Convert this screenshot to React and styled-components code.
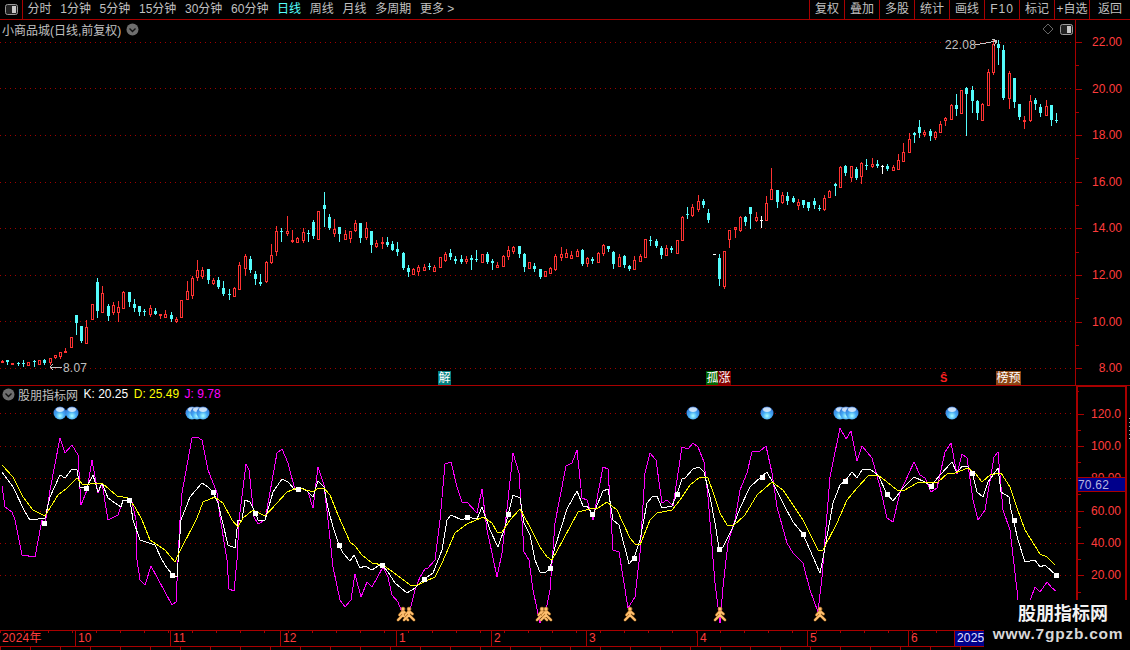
import React from "react";
import styled, { createGlobalStyle } from "styled-components";

const RED_LINE = "#a80000";
const AXIS_RED = "#ff3c3c";
const UI_FONT = `"Liberation Sans", "Noto Sans CJK SC", sans-serif`;

const GlobalStyle = createGlobalStyle`
  html, body {
    margin: 0;
    padding: 0;
    background: #000;
    overflow: hidden;
  }
`;

const Screen = styled.div`
  position: relative;
  width: 1130px;
  height: 650px;
  background: #000;
  display: flex;
  flex-direction: column;
  overflow: hidden;
  font-family: ${UI_FONT};
  font-size: 12px;
  color: #c0c0c0;
`;

// top toolbar
const Toolbar = styled.div`
  display: flex;
  height: 19px;
  flex: none;
  border-bottom: 1px solid ${RED_LINE};
  line-height: 19px;
`;

const PanelToggle = styled.div`
  width: 23px;
  flex: none;
  display: flex;
  align-items: center;
  padding-left: 5px;
  box-sizing: border-box;
  border-right: 1px solid ${RED_LINE};
`;

const PeriodList = styled.div`
  flex: 1;
  display: flex;
  gap: 8.7px;
  padding-left: 4.5px;
`;

const Period = styled.span`
  color: ${(p) => (p.$active ? "#54ffff" : "#c0c0c0")};
  white-space: nowrap;
`;

const ToolButton = styled.div`
  width: ${(p) => p.$w || 35}px;
  box-sizing: border-box;
  border-left: 1px solid ${RED_LINE};
  text-align: center;
  white-space: nowrap;
  letter-spacing: ${(p) => p.$spaced || 0}px;
`;

// panes
const Pane = styled.div`
  display: flex;
  flex: none;
  height: ${(p) => p.$h}px;
  box-sizing: border-box;
  border-bottom: ${(p) => (p.$divided ? `1px solid ${RED_LINE}` : "none")};
`;

const Plot = styled.div`
  position: relative;
  width: 1075px;
  flex: none;
`;

const ChartCanvas = styled.svg`
  position: absolute;
  left: 0;
  top: 0;
  display: block;
`;

const PaneHeader = styled.div`
  position: relative;
  display: flex;
  align-items: center;
  height: 16px;
  padding: ${(p) => p.$pad};
  gap: ${(p) => p.$gap}px;
  white-space: nowrap;
`;

const IndicatorName = styled.span`
  margin-left: -2.5px;
`;

const Reading = styled.span`
  color: ${(p) => p.$color};
`;

const CornerTools = styled.div`
  position: absolute;
  right: 2px;
  top: 3px;
  display: flex;
  align-items: center;
  gap: 6px;
`;

const PriceTag = styled.span`
  position: absolute;
  left: ${(p) => p.$x}px;
  top: ${(p) => p.$y}px;
  line-height: 14px;
  color: #c0c0c0;
  letter-spacing: 0.2px;
`;

const Badge = styled.span`
  position: absolute;
  left: ${(p) => p.$x}px;
  top: 351px;
  height: 14px;
  line-height: 14px;
  padding: 0 0.5px;
  font-size: 12px;
  color: #fff;
  background: ${(p) => p.$bg};
`;

const DollarMark = styled.span`
  position: absolute;
  left: 940px;
  top: 351px;
  font-size: 11px;
  line-height: 14px;
  font-weight: bold;
  color: #ff2020;
`;

// right hand value axes
const PriceAxis = styled.div`
  flex: 1;
  box-sizing: border-box;
  border-left: 1px solid ${RED_LINE};
  padding-top: 15px;
`;

const SubAxis = styled.div`
  position: relative;
  width: 51px;
  margin-right: 2px;
  flex: none;
  box-sizing: border-box;
  border-left: 2px solid ${RED_LINE};
  border-right: 2px solid ${RED_LINE};
  border-top: 1px solid ${RED_LINE};
  margin-left: 1px;
  padding-top: 19.5px;
`;

const AxisRow = styled.div`
  position: relative;
  height: ${(p) => p.$h}px;
  line-height: 14px;
  text-align: right;
  padding-right: ${(p) => p.$right}px;
  color: ${AXIS_RED};

  &::before {
    content: "";
    position: absolute;
    left: 0;
    top: 7px;
    width: 6px;
    height: 1px;
    background: ${RED_LINE};
  }

  &::after {
    content: "";
    position: absolute;
    left: 0;
    top: ${(p) => 7 + p.$h / 2}px;
    width: 3px;
    height: 1px;
    background: ${RED_LINE};
  }
`;

const LatestValue = styled.div`
  position: absolute;
  left: 0;
  top: 90px;
  width: 47px;
  height: 15px;
  box-sizing: border-box;
  border-top: 1px solid ${RED_LINE};
  border-bottom: 1px solid ${RED_LINE};
  background: #00008b;
  color: #b8b8e0;
  line-height: 14px;
  letter-spacing: 0.2px;
`;

const SideScale = styled.div`
  width: 3px;
  height: 19px;
  margin-top: 32px;
  flex: none;
  border-top: 1px solid #bbb;
  border-bottom: 1px solid #bbb;
  background: repeating-linear-gradient(#000 0 3px, #999 3px 4px);
`;

// date axis
const DateAxis = styled.div`
  display: flex;
  flex: none;
  height: 17px;
  box-sizing: border-box;
  border-top: 1px solid ${RED_LINE};
  border-bottom: 1px solid ${RED_LINE};
  line-height: 15px;
  color: ${AXIS_RED};
  background: repeating-linear-gradient(90deg, ${RED_LINE} 0 1px, transparent 1px 24px) 0 0 / 100% 2px no-repeat;
`;

const DateCell = styled.div`
  flex: ${(p) => (p.$w ? `0 0 ${p.$w}px` : 1)};
  box-sizing: border-box;
  padding-left: 2px;
  border-left: ${(p) => (p.$first ? "none" : `1px solid ${RED_LINE}`)};
  background: ${(p) => p.$bg || "transparent"};
  color: ${(p) => p.$fg || AXIS_RED};
  letter-spacing: 0.2px;
  overflow: hidden;
`;

const BottomStrip = styled.div`
  flex: 1;
  background: repeating-linear-gradient(90deg, ${RED_LINE} 0 1px, transparent 1px 30px);
`;

const Watermark = styled.div`
  position: absolute;
  right: 0;
  bottom: 0;
  width: 146px;
  height: 50px;
  background: #000;
  display: flex;
  flex-direction: column;
  align-items: center;
  font-weight: bold;
`;

const MarkTitle = styled.div`
  padding: 2px 0 0 12px;
  font-size: 18px;
  line-height: 24px;
  color: #f2f2f2;
`;

const MarkUrl = styled.div`
  font-size: 15.5px;
  line-height: 16px;
  letter-spacing: 0.75px;
  padding-left: 2px;
  color: #d8d8d8;
`;

const PanelIcon = () => (
  <svg width="13" height="11" viewBox="0 0 13 11">
    <rect x="0.5" y="0.5" width="12" height="10" rx="2" fill="#222" stroke="#9a9a9a" />
    <rect x="7" y="2" width="4" height="7" fill="#c8c8c8" />
  </svg>
);

const DiamondIcon = () => (
  <svg width="12" height="12" viewBox="0 0 12 12">
    <path d="M6 1 L11 6 L6 11 L1 6 Z" fill="none" stroke="#666" />
  </svg>
);

const RoundChevron = () => (
  <svg width="13" height="13" viewBox="0 0 13 13">
    <circle cx="6.5" cy="6.5" r="6" fill="#6e6e6e" />
    <path d="M3.5 5.5 L6.5 8.5 L9.5 5.5" fill="none" stroke="#111" strokeWidth="1.4" />
  </svg>
);

// candles read as [x, high, top, bottom, low, kind] on a 3x grid per block
const seg = (ox, oy, rows) =>
  rows.map(([x, hi, top, bot, lo, kind]) => ({
    x: Math.round(ox + x / 3),
    hi: Math.round(oy + hi / 3),
    top: Math.round(oy + top / 3),
    bot: Math.round(oy + bot / 3),
    lo: Math.round(oy + lo / 3),
    kind,
  }));

const candles = [
  ...seg(0, 180, [
    [5, 541, 542, 545, 546, "r"], [22, 540, 540, 546, 552, "c"], [37, 549, 549, 550, 556, "r"], [55, 546, 549, 551, 554, "c"],
    [70, 540, 549, 551, 557, "c"], [85, 546, 546, 554, 554, "r"], [102, 540, 542, 545, 557, "c"], [118, 541, 541, 551, 551, "r"],
    [133, 537, 540, 550, 552, "c"], [151, 534, 534, 545, 555, "r"], [166, 526, 526, 531, 536, "r"], [181, 517, 517, 527, 537, "r"],
    [195, 504, 513, 516, 516, "r"], [214, 472, 472, 500, 502, "r"], [229, 405, 405, 429, 461, "c"], [244, 438, 438, 483, 486, "c"],
    [259, 420, 441, 489, 491, "r"], [277, 373, 373, 416, 416, "r"], [292, 294, 306, 392, 410, "c"], [307, 318, 340, 395, 395, "r"],
    [325, 372, 378, 408, 419, "c"], [340, 367, 376, 395, 404, "r"], [355, 363, 382, 395, 425, "r"], [370, 334, 336, 383, 383, "r"],
    [388, 336, 336, 365, 378, "c"], [403, 358, 372, 384, 392, "c"], [418, 378, 378, 396, 404, "c"], [433, 388, 393, 397, 404, "c"],
    [451, 376, 385, 401, 410, "r"], [466, 385, 393, 401, 401, "c"], [481, 403, 403, 405, 416, "r"], [496, 391, 402, 410, 410, "r"],
    [514, 397, 405, 417, 423, "c"], [529, 411, 417, 423, 429, "r"], [544, 361, 361, 410, 410, "r"], [562, 304, 334, 356, 356, "r"],
    [577, 289, 295, 344, 356, "r"], [592, 240, 271, 290, 302, "r"], [607, 262, 271, 288, 296, "r"], [625, 267, 267, 300, 308, "c"],
    [640, 295, 301, 309, 315, "r"], [655, 292, 301, 321, 324, "c"], [670, 304, 325, 342, 345, "c"], [688, 328, 341, 343, 356, "c"],
    [703, 322, 325, 348, 350, "r"], [718, 247, 256, 326, 326, "r"], [736, 222, 229, 263, 288, "r"], [751, 229, 238, 270, 276, "c"],
    [766, 274, 282, 296, 311, "c"], [781, 282, 307, 312, 315, "c"], [799, 244, 247, 303, 309, "r"], [814, 192, 226, 246, 252, "r"],
    [829, 138, 154, 214, 228, "r"], [844, 144, 153, 155, 183, "c"], [862, 108, 154, 159, 168, "r"], [877, 150, 179, 182, 189, "r"],
    [892, 172, 175, 186, 188, "r"], [910, 144, 157, 179, 189, "r"], [925, 150, 160, 163, 183, "c"], [940, 120, 126, 168, 174, "c"],
    [955, 92, 92, 176, 176, "r"], [973, 37, 75, 87, 138, "c"], [988, 102, 111, 144, 147, "c"], [1003, 117, 148, 158, 171, "r"],
    [1018, 141, 141, 162, 183, "c"], [1036, 150, 163, 176, 176, "r"],
  ]),
  ...seg(350, 180, [
    [0, 153, 153, 175, 188, "r"], [15, 120, 129, 150, 155, "r"], [30, 129, 129, 175, 186, "c"], [48, 126, 145, 170, 180, "r"],
    [63, 153, 153, 195, 216, "c"], [78, 181, 190, 198, 204, "r"], [96, 171, 186, 189, 207, "r"], [111, 171, 185, 195, 198, "c"],
    [126, 183, 192, 210, 210, "c"], [141, 186, 208, 216, 225, "c"], [159, 216, 219, 264, 267, "c"], [174, 255, 264, 276, 288, "c"],
    [189, 264, 267, 282, 285, "r"], [204, 255, 260, 273, 288, "r"], [222, 252, 261, 269, 269, "r"], [237, 249, 258, 261, 267, "c"],
    [252, 255, 260, 273, 276, "r"], [270, 232, 232, 260, 260, "r"], [285, 216, 222, 240, 246, "r"], [300, 207, 219, 231, 237, "c"],
    [315, 228, 237, 243, 249, "c"], [333, 225, 237, 246, 249, "c"], [348, 228, 237, 243, 252, "r"], [363, 225, 234, 240, 267, "c"],
    [378, 210, 236, 240, 243, "c"], [396, 222, 222, 245, 245, "r"], [411, 216, 222, 246, 249, "c"], [426, 237, 243, 248, 267, "c"],
    [441, 246, 256, 260, 264, "r"], [459, 225, 228, 258, 261, "r"], [474, 198, 210, 228, 240, "r"], [489, 198, 201, 213, 222, "r"],
    [507, 198, 198, 222, 231, "c"], [522, 219, 222, 261, 273, "c"], [537, 246, 246, 264, 264, "r"], [552, 249, 258, 267, 273, "c"],
    [570, 267, 267, 291, 294, "c"], [585, 273, 273, 288, 291, "r"], [600, 261, 264, 279, 282, "r"], [615, 222, 228, 267, 273, "r"],
    [633, 201, 222, 231, 243, "r"], [648, 207, 219, 231, 234, "r"], [663, 213, 225, 233, 233, "r"], [681, 207, 213, 228, 228, "r"],
    [696, 207, 210, 252, 255, "c"], [711, 231, 234, 249, 261, "r"], [726, 231, 237, 243, 249, "c"], [744, 216, 219, 246, 246, "r"],
    [759, 192, 195, 219, 228, "r"], [774, 198, 198, 207, 213, "c"], [789, 213, 216, 252, 264, "c"], [807, 222, 231, 258, 261, "r"],
    [822, 225, 228, 255, 261, "c"], [837, 255, 258, 267, 270, "c"], [852, 228, 240, 267, 267, "r"], [870, 222, 228, 243, 243, "r"],
    [885, 177, 177, 231, 231, "r"], [900, 168, 180, 183, 195, "c"], [918, 177, 183, 198, 201, "c"], [933, 198, 204, 225, 234, "c"],
    [948, 195, 204, 225, 225, "r"], [963, 198, 204, 210, 216, "c"], [981, 180, 180, 219, 219, "r"], [996, 108, 111, 180, 180, "r"],
    [1011, 81, 103, 105, 114, "c"], [1026, 72, 81, 105, 111, "r"], [1044, 45, 63, 87, 96, "r"], [1059, 57, 63, 75, 81, "c"],
    [1074, 87, 99, 120, 126, "c"], [1092, 223, 223, 223, 223, "w"], [1107, 222, 234, 297, 315, "c"], [1122, 213, 213, 318, 327, "r"],
  ]),
  ...seg(720, 30, [
    [28, 600, 600, 627, 654, "r"], [45, 591, 591, 598, 624, "r"], [61, 558, 561, 600, 606, "r"], [76, 558, 561, 576, 585, "c"],
    [91, 531, 531, 552, 594, "c"], [109, 546, 561, 570, 576, "r"], [124, 558, 570, 572, 591, "w"], [139, 498, 519, 570, 570, "r"],
    [154, 414, 477, 507, 510, "r"], [172, 480, 480, 516, 531, "c"], [187, 486, 495, 516, 522, "r"], [202, 486, 498, 513, 522, "c"],
    [220, 498, 504, 516, 516, "c"], [235, 507, 516, 525, 540, "r"], [250, 510, 510, 525, 531, "c"], [265, 516, 516, 534, 540, "c"],
    [283, 504, 513, 525, 534, "c"], [298, 525, 534, 537, 540, "c"], [313, 495, 504, 537, 543, "r"], [328, 480, 483, 501, 501, "r"],
    [346, 459, 462, 468, 495, "c"], [361, 408, 411, 471, 474, "r"], [376, 405, 408, 429, 435, "c"], [394, 408, 408, 441, 456, "r"],
    [409, 411, 417, 444, 447, "c"], [424, 396, 399, 438, 462, "r"], [439, 387, 406, 409, 417, "c"], [457, 384, 402, 408, 414, "r"],
    [472, 390, 402, 408, 411, "c"], [487, 405, 409, 411, 429, "w"], [502, 402, 408, 417, 420, "c"], [520, 405, 411, 420, 423, "r"],
    [535, 372, 390, 417, 420, "r"], [550, 339, 366, 393, 393, "r"], [568, 309, 327, 366, 366, "r"], [583, 306, 309, 315, 336, "c"],
    [598, 270, 291, 309, 321, "c"], [613, 300, 306, 312, 321, "r"], [631, 297, 303, 318, 330, "c"], [646, 303, 306, 321, 330, "r"],
    [661, 273, 282, 306, 306, "r"], [676, 261, 264, 270, 288, "r"], [694, 222, 225, 267, 267, "r"], [709, 192, 225, 237, 255, "c"],
    [724, 180, 180, 249, 249, "r"], [739, 171, 174, 192, 315, "c"], [757, 168, 180, 213, 246, "c"], [772, 210, 213, 249, 267, "c"],
    [787, 219, 222, 270, 270, "r"], [805, 117, 126, 225, 225, "r"], [820, 30, 42, 126, 135, "r"], [835, 30, 42, 54, 102, "c"],
    [850, 45, 60, 205, 207, "c"], [868, 123, 129, 204, 237, "r"], [883, 144, 144, 216, 231, "c"], [898, 222, 222, 261, 267, "c"],
    [913, 258, 270, 274, 297, "r"], [931, 195, 213, 270, 276, "r"], [946, 204, 210, 222, 237, "c"], [961, 222, 231, 249, 258, "c"],
    [979, 210, 228, 255, 255, "r"], [994, 225, 225, 270, 285, "c"], [1009, 249, 271, 273, 276, "c"],
  ]),
];

const CANDLE_RED = "#ff3232";
const CANDLE_CYAN = "#54fcfc";

const Candle = ({ c }) => {
  const mid = c.x + 0.5;
  if (c.kind === "r") {
    return (
      <g stroke={CANDLE_RED} fill="none">
        {c.hi < c.top && <line x1={mid} x2={mid} y1={c.hi} y2={c.top} />}
        {c.lo > c.bot && <line x1={mid} x2={mid} y1={c.bot} y2={c.lo} />}
        <rect x={c.x - 0.5} y={c.top + 0.5} width={2} height={Math.max(c.bot - c.top, 1)} />
      </g>
    );
  }
  const color = c.kind === "c" ? CANDLE_CYAN : "#fff";
  return (
    <g>
      <rect x={c.x} y={c.hi} width={1} height={c.lo - c.hi + 1} fill={color} />
      <rect x={c.x - 1} y={c.top} width={3} height={Math.max(c.bot - c.top, 1)} fill={color} />
    </g>
  );
};

const jLine =
  "2,486 5,507 12,512 15,520 22,555 35,557 42,520 45,525 50,490 60,438 65,453 72,445 78,455 81,505 87,490 92,460 98,493 102,483 108,520 118,515 123,500 132,502 136,520 137,560 140,580 145,585 151,566 172,605 176,602 178,560 180,520 182,493 192,438 197,437 202,440 208,470 217,493 220,517 227,560 229,589 234,591 237,560 239,520 246,464 249,470 254,517 258,524 265,520 277,453 282,449 288,463 295,490 303,488 308,492 313,508 318,467 324,485 328,520 333,567 340,600 345,607 351,600 355,574 361,597 367,582 372,587 383,567 388,577 392,595 398,602 403,615 410,610 415,590 420,577 425,569 428,568 435,560 440,520 445,464 451,462 457,487 462,502 467,502 477,513 482,489 487,530 492,553 497,577 502,553 508,500 513,453 519,473 524,552 529,560 533,590 540,623 546,610 550,590 555,523 566,466 572,463 577,450 582,498 587,500 593,520 603,467 608,469 613,550 619,552 628,608 635,597 640,553 645,473 650,453 656,460 662,503 667,500 673,506 682,447 688,449 693,443 698,447 704,462 708,497 715,583 720,623 723,587 728,543 735,520 740,490 747,473 752,452 760,451 766,446 772,473 777,507 787,543 793,553 803,563 810,590 818,612 822,577 830,477 840,428 846,439 851,431 857,461 862,446 872,458 880,487 887,518 893,522 900,493 914,462 920,475 925,478 931,492 937,488 945,452 951,443 957,474 962,454 967,458 973,500 978,520 985,510 994,457 998,452 1003,510 1010,530 1017,590 1020,625 1028,622 1031,598 1035,587 1040,592 1047,582 1052,588 1056,591";

const kLine =
  "2,472 13,487 25,512 30,520 38,519 45,518 50,497 60,475 65,478 72,469 77,470 80,487 86,488 93,475 98,492 102,483 108,498 115,503 121,507 123,500 130,500 133,520 140,540 155,545 162,560 167,568 172,574 177,577 181,520 190,497 202,483 208,487 213,492 218,503 222,520 228,545 235,548 238,520 242,520 245,500 250,502 255,512 258,520 265,520 273,492 282,479 288,482 295,490 303,488 308,492 313,497 318,481 324,487 328,508 333,527 339,545 343,553 350,561 354,555 360,568 365,566 372,570 378,566 382,565 388,572 395,583 407,593 415,588 424,579 433,573 442,550 447,520 451,515 462,520 467,517 477,519 482,507 490,530 498,547 505,527 513,495 520,498 524,523 530,535 535,560 540,572 546,572 550,568 555,547 567,509 577,491 583,506 587,506 593,515 603,491 608,489 613,520 619,525 629,564 634,558 640,540 647,503 652,497 657,496 662,508 667,507 672,506 677,494 682,479 685,478 693,469 699,467 704,472 710,497 715,523 719,548 723,547 733,527 740,508 750,487 761,477 767,472 773,483 783,503 793,522 803,534 820,573 824,553 833,503 840,485 845,481 852,472 857,478 862,470 870,469 878,475 887,494 893,501 903,488 914,477 925,482 931,486 940,475 952,462 957,473 962,466 967,466 972,472 977,492 983,497 988,482 998,468 1001,492 1009,497 1011,510 1018,540 1025,562 1035,560 1040,567 1045,565 1056,575";

const dLine =
  "2,465 13,477 23,497 33,510 45,516 58,495 67,488 77,478 83,485 97,483 102,483 117,496 128,498 135,507 142,520 150,540 165,550 175,562 178,555 197,518 203,502 215,497 223,503 232,520 238,527 243,518 253,510 265,516 277,503 287,492 297,488 303,489 313,492 318,488 324,488 330,495 338,515 350,542 355,546 362,555 372,563 383,565 397,575 410,585 415,586 435,577 442,563 455,533 467,524 483,517 492,523 497,532 502,532 510,520 520,509 530,527 540,547 547,557 552,560 563,540 578,512 590,509 598,508 607,502 617,510 630,538 635,544 640,545 650,520 657,513 672,510 680,500 690,485 700,477 708,478 713,492 720,513 727,525 733,526 745,515 757,495 772,482 783,490 803,520 818,550 823,550 837,523 847,500 857,488 868,476 878,475 887,482 897,490 903,491 917,483 927,482 937,483 948,473 955,473 968,468 975,473 982,482 990,475 1001,473 1010,487 1017,508 1025,530 1040,554 1047,557 1055,565";

const kDots = [
  [44, 523], [86, 488], [129, 500], [172, 575], [213, 492], [255, 513], [298, 489], [339, 545],
  [382, 565], [424, 579], [467, 517], [508, 514], [550, 568], [592, 514], [634, 558], [677, 494],
  [719, 549], [762, 477], [803, 534], [845, 481], [887, 494], [931, 486], [972, 473], [1014, 520], [1056, 575],
];

const ballXs = [60, 72, 192, 197, 203, 693, 767, 840, 846, 852, 952];
const runnerXs = [403, 409, 542, 546, 630, 720, 820];

const RUNNER_LIMBS = "M0 -3 L-3.5 1 M0 -3 L3.5 0 M0 -3 L0 1 M0 1 L-5 6 M0 1 L5 6";

const Runner = ({ x }) => (
  <g transform={`translate(${x} 614)`} fill="none" strokeLinecap="round">
    <path d={RUNNER_LIMBS} stroke="#a86a20" strokeWidth="2.8" />
    <path d={RUNNER_LIMBS} stroke="#ffc070" strokeWidth="1.8" />
    <circle cy="-5" r="2" fill="#ffc070" stroke="#a86a20" strokeWidth="0.5" />
  </g>
);

const Ball = ({ x }) => (
  <g>
    <circle cx={x} cy="413" r="6.5" fill="url(#ball)" />
    <ellipse cx={x} cy="409.6" rx="4" ry="2.4" fill="#fff" opacity="0.72" />
  </g>
);

const Grid = ({ ys }) => (
  <g stroke="#a00000" strokeDasharray="1 4">
    {ys.map((y) => (
      <line key={y} x1="0" x2="1075" y1={y + 0.5} y2={y + 0.5} />
    ))}
  </g>
);

const priceLabels = ["22.00", "20.00", "18.00", "16.00", "14.00", "12.00", "10.00", "8.00"];
const kdjLabels = ["120.0", "100.0", "80.00", "60.00", "40.00", "20.00"];

const periods = ["分时", "1分钟", "5分钟", "15分钟", "30分钟", "60分钟", "日线", "周线", "月线", "多周期", "更多"];
const tools = ["复权", "叠加", "多股", "统计", "画线", "F10", "标记", "+自选"];

const months = [
  { label: "2024年", w: 75 },
  { label: "10", w: 95 },
  { label: "11", w: 110 },
  { label: "12", w: 116 },
  { label: "1", w: 95 },
  { label: "2", w: 95 },
  { label: "3", w: 111 },
  { label: "4", w: 110 },
  { label: "5", w: 101 },
  { label: "6", w: 46 },
];

export default function App() {
  return (
    <Screen>
      <GlobalStyle />
      <Toolbar>
        <PanelToggle>
          <PanelIcon />
        </PanelToggle>
        <PeriodList>
          {periods.map((p) => (
            <Period key={p} $active={p === "日线"}>
              {p}
              {p === "更多" ? " >" : ""}
            </Period>
          ))}
        </PeriodList>
        {tools.map((t) => (
          <ToolButton key={t} $spaced={t === "F10" ? 1 : 0}>
            {t}
          </ToolButton>
        ))}
        <ToolButton $w={41}>返回</ToolButton>
      </Toolbar>

      <Pane $h={366} $divided>
        <Plot>
          <ChartCanvas width="1075" height="365" viewBox="0 20 1075 365" shapeRendering="crispEdges">
            <Grid ys={[42, 88, 135, 182, 228, 275, 321, 368]} />
            {candles.map((c, i) => (
              <Candle key={i} c={c} />
            ))}
            <path d="M975 45 L986 43 L997 41 M992 39 L997 41 L994 46" fill="none" stroke="#c8c8c8" />
            <path d="M62 367 L50 367 M53 364 L50 367 L53 370" fill="none" stroke="#c8c8c8" />
          </ChartCanvas>
          <PaneHeader $pad="1px 0 0 2px" $gap={5}>
            小商品城(日线,前复权)
            <RoundChevron />
          </PaneHeader>
          <CornerTools>
            <DiamondIcon />
            <PanelIcon />
          </CornerTools>
          <PriceTag $x={945} $y={18}>22.08</PriceTag>
          <PriceTag $x={63} $y={341}>8.07</PriceTag>
          <Badge $x={438} $bg="#008080">解</Badge>
          <Badge $x={706} $bg="#006400">孤</Badge>
          <Badge $x={718} $bg="#800000">涨</Badge>
          <DollarMark>Ŝ</DollarMark>
          <Badge $x={996} $bg="#8b4513">榜预</Badge>
        </Plot>
        <PriceAxis>
          {priceLabels.map((v) => (
            <AxisRow key={v} $h={46.6} $right={8}>
              {v}
            </AxisRow>
          ))}
        </PriceAxis>
      </Pane>

      <Pane $h={244}>
        <Plot>
          <ChartCanvas width="1075" height="244" viewBox="0 386 1075 244" shapeRendering="crispEdges">
            <defs>
              <radialGradient id="ball" cx="0.5" cy="0.72" r="0.72">
                <stop offset="0" stopColor="#a8ffff" />
                <stop offset="0.45" stopColor="#42a8f4" />
                <stop offset="0.8" stopColor="#3b82dc" />
                <stop offset="1" stopColor="#2c62b4" />
              </radialGradient>
            </defs>
            <Grid ys={[413, 446, 478, 511, 543, 575]} />
            <polyline points={jLine} fill="none" stroke="#ff00ff" />
            <polyline points={kLine} fill="none" stroke="#fff" />
            <polyline points={dLine} fill="none" stroke="#ffff00" />
            {kDots.map(([x, y]) => (
              <rect key={x} x={x - 2} y={y - 2} width="5" height="5" fill="#fff" />
            ))}
            <g shapeRendering="auto">
              {ballXs.map((x) => (
                <Ball key={x} x={x} />
              ))}
              {runnerXs.map((x) => (
                <Runner key={x} x={x} />
              ))}
            </g>
          </ChartCanvas>
          <PaneHeader $pad="0 0 0 2px" $gap={5.5}>
            <RoundChevron />
            <IndicatorName>股朋指标网</IndicatorName>
            <Reading $color="#fff">K: 20.25</Reading>
            <Reading $color="#ffff00">D: 25.49</Reading>
            <Reading $color="#ff00ff">J: 9.78</Reading>
          </PaneHeader>
        </Plot>
        <SubAxis>
          {kdjLabels.map((v) => (
            <AxisRow key={v} $h={32.4} $right={4}>
              {v}
            </AxisRow>
          ))}
          <LatestValue>70.62</LatestValue>
        </SubAxis>
        <SideScale />
      </Pane>

      <DateAxis>
        {months.map((m, i) => (
          <DateCell key={m.label} $w={m.w} $first={i === 0}>
            {m.label}
          </DateCell>
        ))}
        <DateCell $bg="#00008b" $fg="#e0e0ff">2025年</DateCell>
      </DateAxis>
      <BottomStrip />

      <Watermark>
        <MarkTitle>股朋指标网</MarkTitle>
        <MarkUrl>www.7gpzb.com</MarkUrl>
      </Watermark>
    </Screen>
  );
}
